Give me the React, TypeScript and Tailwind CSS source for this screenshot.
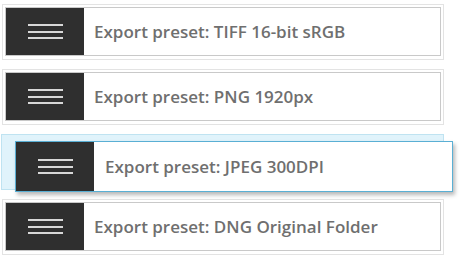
import React from "react";

function Handle() {
  return (
    <div className="flex h-full w-[78px] shrink-0 flex-col items-center justify-center gap-[4.5px] bg-[#2f2f2f]">
      <div className="h-[2px] w-[35px] bg-[#d8d8d8]" />
      <div className="h-[2px] w-[35px] bg-[#d8d8d8]" />
      <div className="h-[2px] w-[35px] bg-[#d8d8d8]" />
    </div>
  );
}

function Row({ label }: { label: string }) {
  return (
    <div className="ml-[2px] h-[56px] w-[442px] border border-[#e3e3e3] bg-white pt-[2px] pb-[3px] px-[2px]">
      <div className="flex h-full w-full items-center border border-[#c9c9c9] bg-white">
        <Handle />
        <span className="pl-[10px] text-[17px] font-semibold text-[#6f6f6f]" style={{ fontFamily: '"Open Sans", sans-serif' }}>
          {label}
        </span>
      </div>
    </div>
  );
}

export default function App() {
  return (
    <div className="h-[260px] w-[460px] bg-white pt-[4px]">
      <div className="flex flex-col gap-[9px]">
        <Row label="Export preset: TIFF 16-bit sRGB" />
        <Row label="Export preset: PNG 1920px" />
        <div className="relative ml-[1px] h-[56px] w-[443px] border border-[#bfe3f1] bg-[#e0f3fb]">
          <div className="absolute left-[13px] top-[6px] flex h-[51px] w-[438px] items-center border border-[#5aafd4] bg-white shadow-[2px_3px_4px_rgba(0,0,0,0.28)]">
            <Handle />
            <span className="pl-[11px] text-[17px] font-semibold text-[#6f6f6f]" style={{ fontFamily: '"Open Sans", sans-serif' }}>
              Export preset: JPEG 300DPI
            </span>
          </div>
        </div>
        <Row label="Export preset: DNG Original Folder" />
      </div>
    </div>
  );
}
